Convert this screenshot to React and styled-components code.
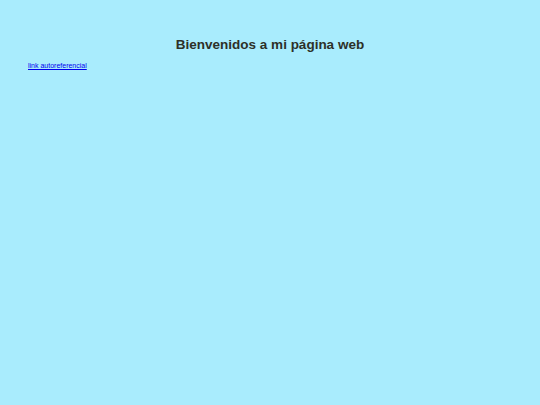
import React from 'react';
import styled, { createGlobalStyle } from 'styled-components';

const GlobalStyle = createGlobalStyle`
  html, body {
    margin: 0;
    padding: 0;
    background: #a9ecfd;
    font-family: "Liberation Sans", Arial, sans-serif;
  }
`;

const Page = styled.div`
  padding: 37px 28px 0;
`;

const Title = styled.h1`
  margin: 0 0 2px;
  text-align: center;
  font-size: 13.5px;
  font-weight: bold;
  color: #2d3028;
`;

const SelfLink = styled.a`
  font-size: 7px;
  color: #0000ee;
  text-decoration: underline;
`;

export default function App() {
  return (
    <>
      <GlobalStyle />
      <Page>
        <Title>Bienvenidos a mi página web</Title>
        <SelfLink href="#">link autoreferencial</SelfLink>
      </Page>
    </>
  );
}
